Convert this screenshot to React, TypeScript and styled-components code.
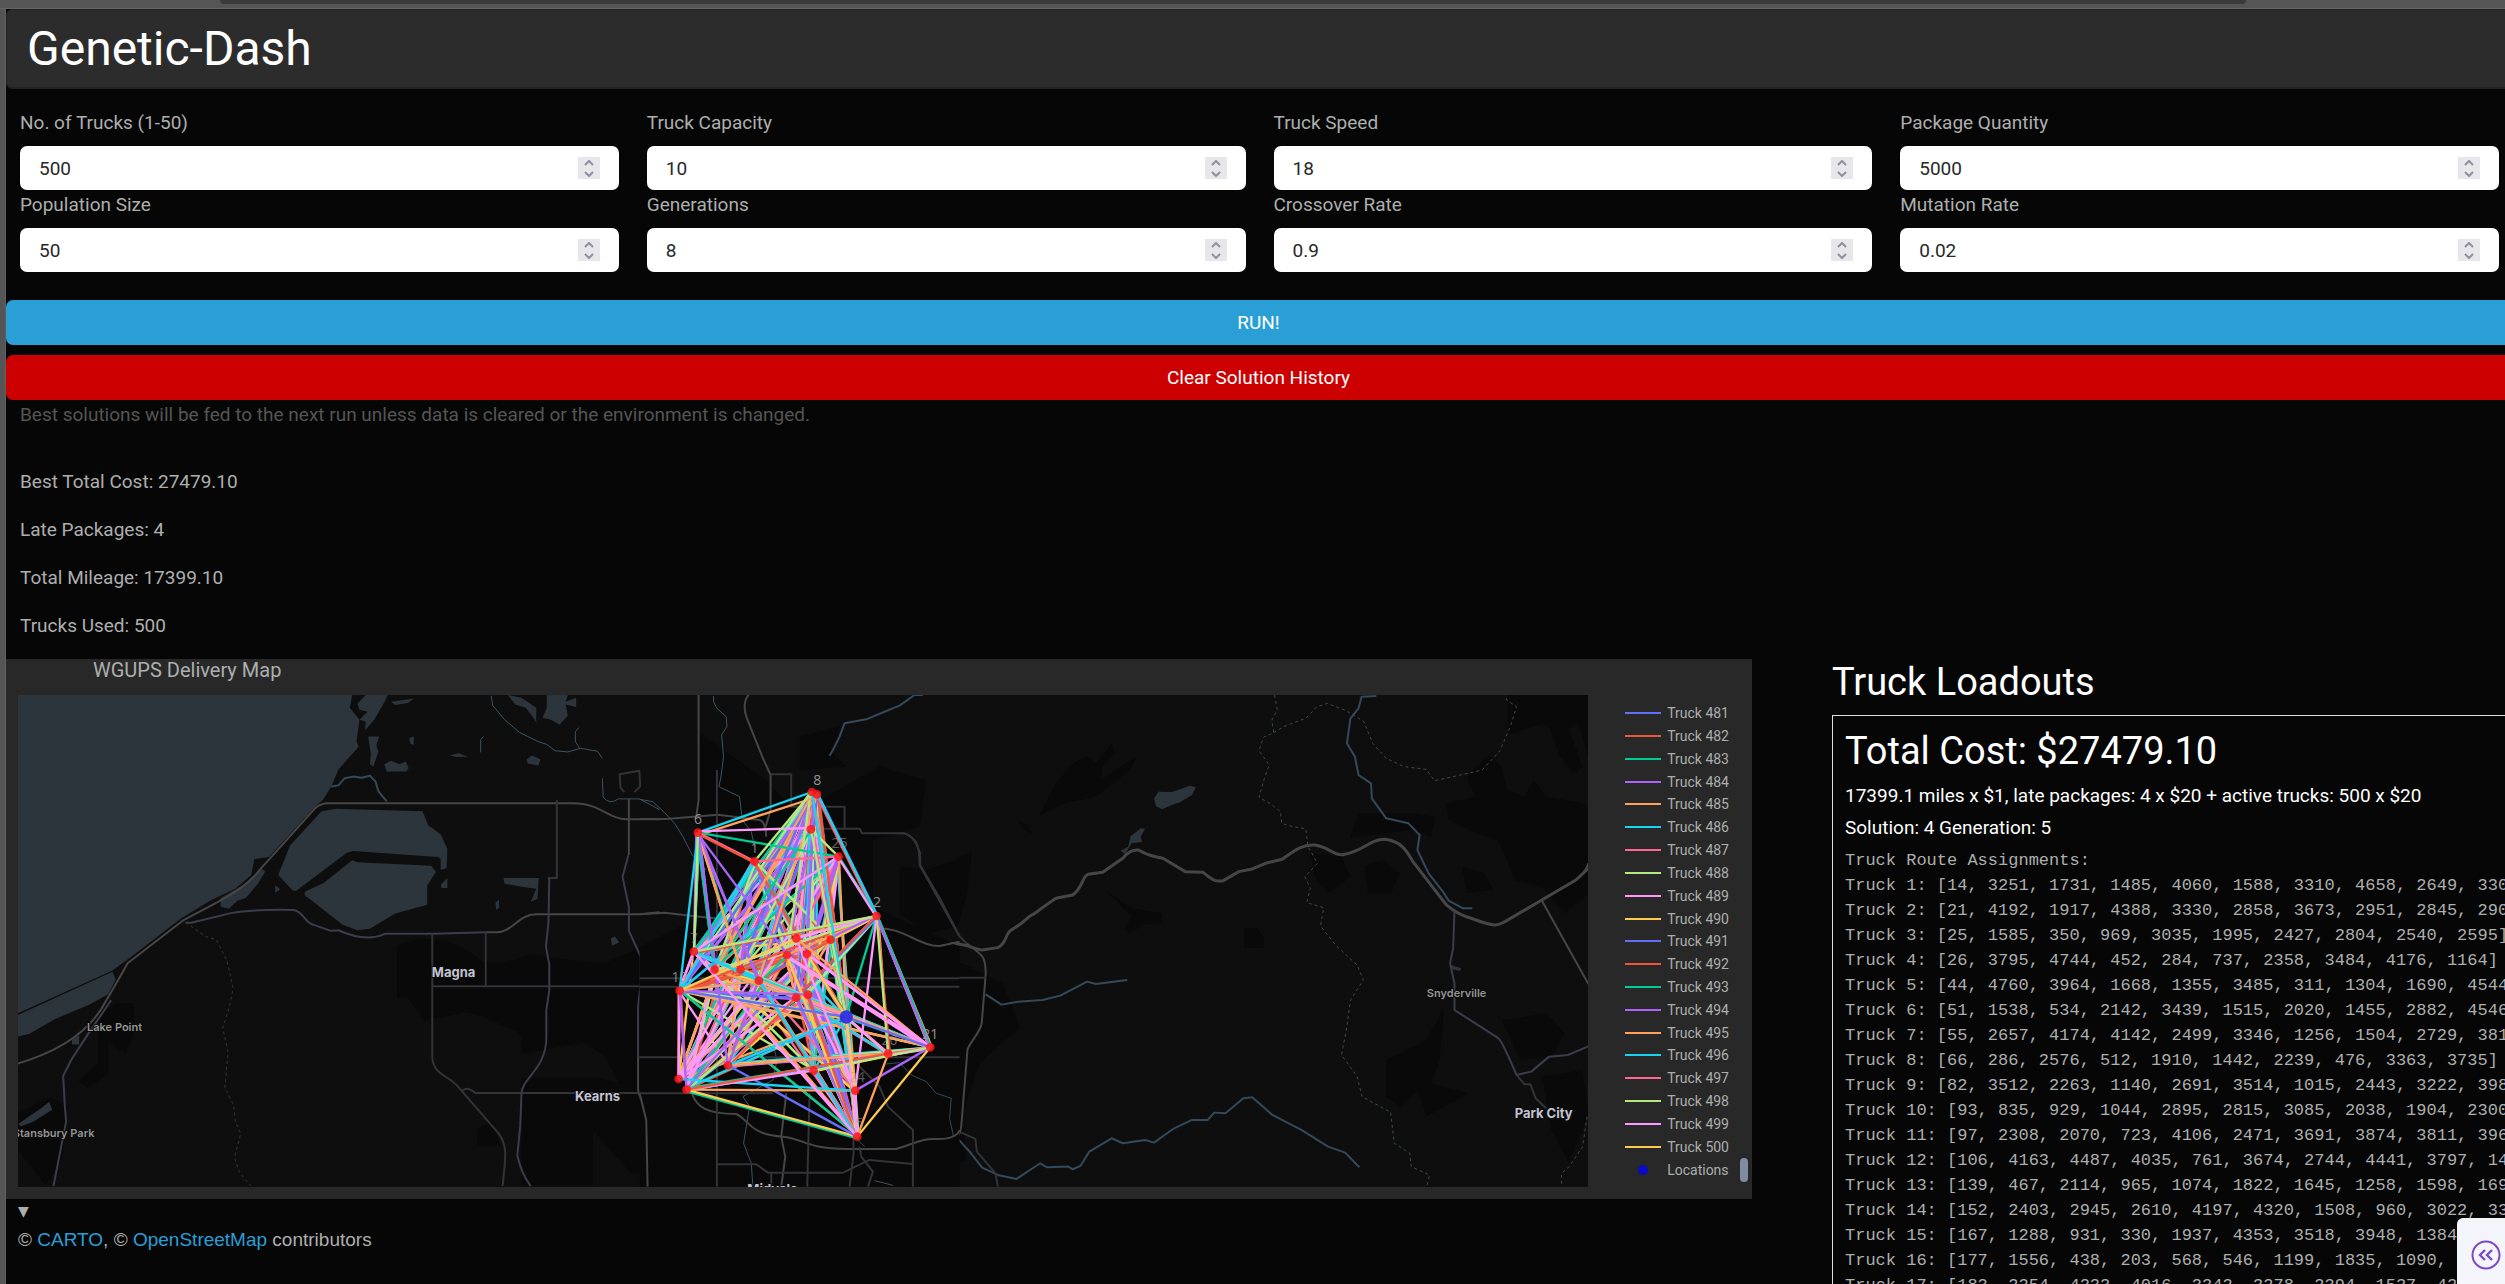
import React from "react";
import styled, { createGlobalStyle } from "styled-components";

const GlobalStyle = createGlobalStyle`
  *, *::before, *::after { box-sizing: border-box; }
  body {
    margin: 0;
    background: #060606;
    color: #adafae;
    font-family: Roboto, "Liberation Sans", sans-serif;
    font-size: 19px;
    line-height: 29px;
  }
`;

const Frame = styled.div`
  height: 100vh;
  overflow: hidden;
  padding-left: 6px;
  background: linear-gradient(to right, #555 5px, #606060 5px, #606060 6px, #060606 6px);
`;

const TabStrip = styled.div`
  height: 9px;
  margin-left: -6px;
  background: #555;
  border-bottom: 1px solid #666;
`;

const AddressBar = styled.div`
  height: 4px;
  margin: 0 259px 0 220px;
  background: #3b3b3b;
  border-radius: 0 0 4px 4px;
`;

const Page = styled.main`
  width: 100vw;
`;

const Header = styled.header`
  height: 80px;
  padding: 0 20px;
  display: flex;
  align-items: center;
  background: #2c2c2c;
  border: 1px solid #222;
  border-bottom-width: 2px;
  border-radius: 6px;
`;

const Brand = styled.h1`
  margin: 0;
  color: #fff;
  font-size: 48px;
  font-weight: 400;
  line-height: 58px;
`;

const Form = styled.form`
  margin: 0;
  padding-top: 19px;
`;

const Fields = styled.div`
  display: grid;
  grid-template-columns: repeat(4, 1fr);
  column-gap: 28px;
  padding: 0 12px 0 14px;
`;

const Field = styled.div`
  display: flex;
  flex-direction: column;
`;

const Label = styled.label`
  margin-bottom: 9px;
`;

const InputBox = styled.div`
  display: flex;
  align-items: center;
  height: 44px;
  padding: 0 19px;
  background: #fff;
  border-radius: 7px;
`;

const NumberInput = styled.input`
  flex: 1;
  min-width: 0;
  padding: 0;
  border: 0;
  outline: 0;
  background: transparent;
  color: #282828;
  font: inherit;
  appearance: textfield;
  &::-webkit-inner-spin-button,
  &::-webkit-outer-spin-button { appearance: none; margin: 0; }
`;

const Stepper = styled.div`
  display: flex;
  flex-direction: column;
  width: 22px;
  height: 22px;
  background: #e6e6eb;
`;

const StepButton = styled.button`
  display: flex;
  flex: 1;
  align-items: center;
  justify-content: center;
  padding: 0;
  border: 0;
  background: none;
  color: #8f8f9d;
`;

const Actions = styled.div`
  display: flex;
  flex-direction: column;
  gap: 10px;
  margin-top: 28px;
`;

const ActionButton = styled.button<{ $tone: string }>`
  height: 45px;
  border: 0;
  border-radius: 7px;
  background: ${(p) => p.$tone};
  color: #fff;
  font: inherit;
`;

const Hint = styled.p`
  margin: 0 14px;
  color: #555;
`;

const Stats = styled.div`
  display: flex;
  flex-direction: column;
  gap: 19px;
  margin: 38px 14px 19px;
`;

const Stat = styled.p`
  margin: 0;
`;

const Results = styled.section`
  display: grid;
  grid-template-columns: 18fr 7fr;
  column-gap: 80px;
`;

const Column = styled.div`
  min-width: 0;
`;

const MapCard = styled.div`
  padding: 0 0 12px 12px;
  background: #282828;
`;

const MapTitle = styled.h2`
  margin: 0;
  padding: 0 0 14px 75px;
  color: #adafae;
  font-size: 20px;
  font-weight: 400;
  line-height: 22px;
`;

const MapBody = styled.div`
  display: flex;
  height: 492px;
`;

const MapSvg = styled.svg`
  flex: 1;
  min-width: 0;
  height: 100%;
  background: #0e0e0e;
`;

const Legend = styled.ul`
  display: flex;
  flex-direction: column;
  justify-content: flex-end;
  flex: none;
  margin: 0;
  padding: 0 0 6px 37px;
  overflow: hidden;
  list-style: none;
  font-size: 14px;
  line-height: 16px;
`;

const LegendRows = styled.div`
  display: grid;
  grid-auto-rows: 1fr;
  flex: none;
  height: 502px;
`;

const LegendRow = styled.li`
  display: flex;
  align-items: center;
  gap: 6px;
  white-space: nowrap;
`;

const Swatch = styled.span<{ $color: string }>`
  width: 36px;
  height: 2px;
  background: ${(p) => p.$color};
`;

const DotCell = styled.span`
  display: flex;
  justify-content: center;
  width: 36px;
`;

const Dot = styled.span`
  width: 10px;
  height: 10px;
  border-radius: 5px;
  background: #0a0ac8;
`;

const LegendTrack = styled.div`
  display: flex;
  align-items: flex-end;
  justify-content: flex-end;
  width: 23px;
  padding: 0 4px 5px 0;
`;

const LegendThumb = styled.div`
  width: 8px;
  height: 24px;
  border-radius: 4px;
  background: #808ba4;
`;

const MapNotes = styled.div`
  padding-left: 12px;
`;

const Marker = styled.div`
  font-family: "DejaVu Sans", sans-serif;
  font-size: 14px;
  line-height: 24px;
`;

const Attribution = styled.p`
  margin: 2px 0 0;
  font-family: "Liberation Sans", Arial, sans-serif;
  a { color: #2a9fd6; text-decoration: none; }
`;

const Heading = styled.h2`
  margin: 0 0 10px;
  color: #fff;
  font-size: 38px;
  font-weight: 400;
  line-height: 46px;
`;

const Loadouts = styled.div`
  padding: 12px;
  border: 1px solid #dedede;
`;

const SubHeading = styled.h3`
  margin: 0 0 9px;
  color: #fff;
  font-size: 19px;
  font-weight: 400;
  line-height: 23px;
`;

const Routes = styled.pre`
  margin: 0;
  font-family: "Liberation Mono", "Courier New", monospace;
  font-size: 17px;
  line-height: 25px;
`;

const ExpandButton = styled.button`
  position: fixed;
  right: 0;
  bottom: 0;
  display: flex;
  align-items: flex-start;
  width: 48px;
  height: 66px;
  padding: 22px 0 0 14px;
  border: 0;
  border-radius: 6px 0 0 0;
  background: #f4f5fb;
`;

type FieldSpec = { id: string; label: string; value: string; step: string };

const FIELDS: FieldSpec[] = [
  { id: "trucks", label: "No. of Trucks (1-50)", value: "500", step: "1" },
  { id: "capacity", label: "Truck Capacity", value: "10", step: "1" },
  { id: "speed", label: "Truck Speed", value: "18", step: "1" },
  { id: "packages", label: "Package Quantity", value: "5000", step: "1" },
  { id: "population", label: "Population Size", value: "50", step: "1" },
  { id: "generations", label: "Generations", value: "8", step: "1" },
  { id: "crossover", label: "Crossover Rate", value: "0.9", step: "0.1" },
  { id: "mutation", label: "Mutation Rate", value: "0.02", step: "0.01" },
];

const STATS = [
  "Best Total Cost: 27479.10",
  "Late Packages: 4",
  "Total Mileage: 17399.10",
  "Trucks Used: 500",
];

const COLORS = [
  "#636efa", "#ef553b", "#00cc96", "#ab63fa", "#ffa15a",
  "#19d3f3", "#ff6692", "#b6e880", "#ff97ff", "#fecb52",
];

const ROUTES = `Truck Route Assignments:
Truck 1: [14, 3251, 1731, 1485, 4060, 1588, 3310, 4658, 2649, 330
Truck 2: [21, 4192, 1917, 4388, 3330, 2858, 3673, 2951, 2845, 290
Truck 3: [25, 1585, 350, 969, 3035, 1995, 2427, 2804, 2540, 2595]
Truck 4: [26, 3795, 4744, 452, 284, 737, 2358, 3484, 4176, 1164]
Truck 5: [44, 4760, 3964, 1668, 1355, 3485, 311, 1304, 1690, 4544
Truck 6: [51, 1538, 534, 2142, 3439, 1515, 2020, 1455, 2882, 4546
Truck 7: [55, 2657, 4174, 4142, 2499, 3346, 1256, 1504, 2729, 381
Truck 8: [66, 286, 2576, 512, 1910, 1442, 2239, 476, 3363, 3735]
Truck 9: [82, 3512, 2263, 1140, 2691, 3514, 1015, 2443, 3222, 398
Truck 10: [93, 835, 929, 1044, 2895, 2815, 3085, 2038, 1904, 2300
Truck 11: [97, 2308, 2070, 723, 4106, 2471, 3691, 3874, 3811, 396
Truck 12: [106, 4163, 4487, 4035, 761, 3674, 2744, 4441, 3797, 14
Truck 13: [139, 467, 2114, 965, 1074, 1822, 1645, 1258, 1598, 169
Truck 14: [152, 2403, 2945, 2610, 4197, 4320, 1508, 960, 3022, 33
Truck 15: [167, 1288, 931, 330, 1937, 4353, 3518, 3948, 1384,
Truck 16: [177, 1556, 438, 203, 568, 546, 1199, 1835, 1090, 1
Truck 17: [183, 2254, 4233, 4016, 3342, 3278, 2394, 1527, 4287`;

/* Delivery stops in the route layer's own coordinates. */
const STOPS: Record<string, [number, number]> = {
  six: [175, 218], eight: [517, 96], eightB: [532, 103], nine: [514, 208],
  one: [345, 304], n25: [597, 290], two: [711, 468], a: [470, 535],
  b: [573, 539], c: [442, 585], d: [502, 582], seven: [163, 575],
  e: [225, 629], f: [303, 629], g: [358, 662], n15: [120, 692],
  h: [470, 713], i: [505, 704], hub: [620, 771], n21: [872, 862],
  n20: [746, 881], j: [265, 916], k: [522, 932], l: [117, 957],
  m: [141, 989], n24: [647, 992], five: [653, 1130],
};

const NORTH = ["eight", "eightB", "nine", "one", "n25"];
const CORE = ["a", "b", "c", "d", "e", "f", "g", "h", "i", "hub", "seven", "n15"];
const SOUTH = ["j", "k", "l", "m", "n24", "hub", "five"];

type Leg = { from: string; to: string; color: string; dx: number; dy: number };

function buildLegs(): Leg[] {
  let seed = 20;
  const next = () => {
    seed = (seed * 16807) % 2147483647;
    return seed / 2147483647;
  };
  const legs: Leg[] = [];
  const add = (from: string, to: string) => {
    if (from === to) return;
    legs.push({
      from, to,
      color: COLORS[Math.floor(next() * 10)],
      dx: Math.round(next() * 12 - 6),
      dy: Math.round(next() * 12 - 6),
    });
  };
  const between = (xs: string[], ys: string[], count: number) => {
    for (let n = 0; n < count; n++) {
      add(xs[Math.floor(next() * xs.length)], ys[Math.floor(next() * ys.length)]);
    }
  };
  between(NORTH, SOUTH, 90);
  between(CORE, SOUTH, 110);
  between(CORE, CORE, 80);
  between(NORTH, CORE, 130);
  between(["two"], [...CORE, "n25", "eightB", "n24", "n20", "j"], 24);
  between(["n21"], [...CORE, "j", "m", "k", "two"], 26);
  between(["n20"], ["hub", "d", "two", "k", "j", "m", "h"], 14);
  between(["five"], ["hub", "k", "n24", "h", "i", "g", "c"], 24);
  between(["six"], ["c", "g", "e", "seven", "f", "j"], 14);
  return legs;
}

const FIXED_LEGS: [string, string, number, number][] = [
  ["six", "eight", 5, 0], ["six", "eightB", 4, 8], ["six", "nine", 8, -4], ["six", "n25", 2, 0],
  ["six", "one", 6, 0], ["six", "one", 1, 4], ["six", "n15", 5, 0], ["six", "seven", 7, 3],
  ["one", "eight", 7, 0], ["one", "n25", 6, 0], ["nine", "n25", 7, 0], ["eightB", "two", 1, 5],
  ["eightB", "two", 6, 0], ["eightB", "two", 5, -6], ["n25", "two", 2, 0], ["n25", "two", 8, 4],
  ["two", "n21", 2, 0], ["two", "n21", 2, -6], ["two", "n21", 3, 4], ["two", "n20", 7, 0],
  ["two", "n24", 8, 0], ["a", "two", 8, 0], ["seven", "two", 7, 0], ["seven", "n25", 8, 0],
  ["c", "n21", 8, 6], ["a", "n21", 4, 0], ["d", "n21", 8, 0], ["hub", "n21", 0, 0],
  ["n20", "n21", 6, 0], ["n20", "n21", 8, 5], ["n24", "n21", 3, 0], ["five", "n21", 9, 0],
  ["five", "n20", 4, 0], ["n24", "five", 8, 0], ["m", "five", 2, 5], ["m", "five", 9, 0],
  ["j", "five", 0, 0], ["m", "n24", 4, 0], ["l", "n24", 5, 0], ["m", "k", 8, 0],
  ["k", "n21", 7, 0], ["j", "n20", 4, 0], ["m", "n20", 1, 0], ["j", "hub", 5, 0],
  ["n15", "l", 6, 0], ["n15", "l", 8, 5], ["n15", "m", 3, 0], ["n15", "hub", 0, 0],
  ["n15", "i", 3, 0], ["n15", "g", 4, 0], ["n15", "a", 9, 0], ["seven", "five", 8, 0],
  ["seven", "g", 5, 0], ["a", "n24", 8, 0], ["hub", "five", 8, 0], ["hub", "n24", 9, 0],
  ["hub", "d", 9, 0], ["hub", "n20", 8, 0], ["eight", "hub", 5, 0], ["nine", "hub", 7, 0],
];

const LEGS = buildLegs();

const STOP_LABELS: [string, number, number, number][] = [
  ["8", 533, 76, 0.9], ["6", 175, 192, 0.9], ["1", 345, 278, 0.8], ["25", 600, 264, 0.6],
  ["2", 712, 442, 0.9], ["7", 163, 548, 0.5], ["19", 120, 667, 0.8], ["21", 872, 836, 0.9],
  ["20", 750, 856, 0.6], ["22", 524, 906, 0.4], ["24", 652, 966, 0.5], ["5", 660, 1104, 0.5],
  ["18", 470, 510, 0.3], ["9", 620, 736, 0.4], ["13", 518, 176, 0.3],
];

const ROAD = "#464646";
const ROAD_DIM = "#333338";
const ROAD_BLUE = "#3b3d4d";
const STREAM = "#34495a";
const WATER = "#2c353c";
const URBAN = "#090909";

type StrokeProps = { d: string; c?: string; w?: number; dash?: string };

const Stroke = ({ d, c = ROAD, w = 2, dash }: StrokeProps) => (
  <path d={d} fill="none" stroke={c} strokeWidth={w} strokeDasharray={dash}
    strokeLinejoin="round" vectorEffect="non-scaling-stroke" />
);

const WestTerrain = () => (
  <g transform="translate(0 660) scale(0.4209 0.398)">
    <g fill={URBAN}>
      <path d="M945 718L1000 700L1060 705L1105 725L1150 760H1200L1260 740L1340 752L1440 760L1530 720L1568 700V1200L1500 1120L1440 1000L1390 960L1240 990V940L1160 900L1110 885L1010 905L970 850H945Z" />
      <path d="M232 890L280 862L318 862L320 930L300 990L258 960L258 1040L210 1075L188 1058L235 1010Z" />
      <path d="M43 1140L120 1100L160 1120L150 1250L110 1320L43 1230Z" />
      <path d="M1240 1050H1420L1568 1080V1290H1500L1410 1180V1320H1240ZM1135 1180L1170 1160L1190 1220H1135Z" />
    </g>
    <g fill={WATER}>
      <path d="M43 88H838L832 120L855 150L848 205L853 218L805 275L788 318L768 352L750 368L640 495L605 500L598 540L560 575L500 605L495 575L500 605L430 650L310 748L268 780L43 888Z" />
      <path d="M43 892L268 783L276 803L258 840L215 865L130 903L70 940L43 946Z" />
      <path d="M525 598L580 565L620 525L632 530L615 560L585 598L565 605L545 625L525 620Z" />
      <path d="M765 380L800 374L1005 380L1018 415L1048 438L1064 475L1062 523L1048 527V500L1042 495L840 480L825 484L705 580L697 580L662 540L690 466Z" />
      <path d="M838 503L850 508L1025 517L1037 532L1016 566V615L940 637L880 675L850 679L815 665L740 603L725 592V582L770 560Z" />
      <path d="M850 110L870 88H922L915 105L890 150L868 177L870 155L855 150L874 130L855 125ZM930 105L985 97L970 108L940 113Z" />
      <path d="M876 192H902L895 215L900 230L888 268L880 262L882 235L878 210ZM914 262L930 253L950 262L965 255L972 272L965 280H920ZM973 196L984 192V214L976 210ZM1070 240L1090 234L1113 243L1085 244Z" />
      <path d="M1208 88L1240 95L1275 120V157L1265 140L1250 120L1225 112ZM1300 88H1350L1345 105L1370 95V118L1345 112L1350 140L1330 163L1310 150L1290 145L1300 120ZM1252 250L1265 240L1285 250L1280 265L1255 260Z" />
      <path d="M1197 548H1281L1278 600L1262 608L1275 575L1240 570L1200 562ZM1178 610L1186 602L1187 622L1180 628ZM1048 565L1064 548V573H1050ZM654 566L667 576L655 585ZM1452 700L1462 694L1472 710L1455 718ZM172 955L189 943V966H172Z" />
      <path d="M45 1165L100 1125L118 1110L125 1130L80 1160L50 1172Z" />
    </g>
    <Stroke c="#3e5361" w={1} d="M1168 90L1172 115L1200 150L1235 182L1282 206L1300 212L1320 228L1350 231L1380 222L1420 229L1432 247M1376 170L1368 180V205L1378 222M1150 192L1143 200V232" />
    <Stroke c={STREAM} d="M788 318L805 315L820 297L840 293L860 296L880 291L893 305L900 330L920 355" />
    <Stroke d="M43 1014Q200 965 252 858Q290 790 304 762L435 655L520 607Q590 568 620 525L750 372Q763 360 780 360H1362C1430 360 1445 400 1487 400H1568" />
    <Stroke c={ROAD_BLUE} d="M442 660H455L550 636Q600 626 700 628C725 636 725 660 745 665L785 680L805 679Q870 710 915 688L1030 688L1155 684" />
    <Stroke d="M1155 684H1180C1220 684 1230 640 1275 639H1520L1568 634" />
    <Stroke c={ROAD_DIM} d="M1324 352V548H1302M1155 684V819M1028 690V1000C1032 1040 1060 1042 1085 1067L1186 1190C1208 1222 1202 1250 1195 1322M1028 820H1568M1100 1082Q1112 1070 1130 1088H1568M1518 998H1568" />
    <Stroke c={ROAD_BLUE} d="M1306 548L1304 660L1298 720L1306 765V830L1299 880V950C1298 1030 1240 1050 1240 1090L1237 1170L1230 1245Q1240 1292 1262 1322M1494 490L1480 545L1495 620V680L1523 745V815L1517 870V1000" />
    <Stroke d="M1495 350V490M1517 1000V1080L1537 1160L1539 1322" />
    <Stroke c="#333" d="M1484 332L1475 320L1473 287L1520 278L1522 318L1508 332" />
    <Stroke c="#3e5361" w={1} d="M1432 297L1434 345Q1450 365 1470 349H1520L1568 376" />
    <Stroke c={ROAD_BLUE} d="M265 855L210 940L170 1005L151 1045L155 1120L158 1160L128 1322" />
    <Stroke c="#363636" w={1} dash="3 3" d="M442 660L490 695L515 703L540 755L555 825L545 875L530 925L543 985L535 1075L556 1118L560 1160L573 1190L558 1250L570 1288L597 1322" />
  </g>
);

const EastTerrain = () => (
  <g transform="translate(900 680) scale(0.4464 0.3333)">
    <g fill={URBAN}>
      <path d="M312 408L350 310L390 250L420 225L440 250L475 190L482 215L455 260L450 300L530 230L520 265L440 350L370 370ZM265 425L290 435L297 465L280 450ZM465 635L520 685L588 700L585 730L545 735L515 760L505 745L520 710ZM772 745L800 743L815 770V803H772ZM1362 45H1543V230L1520 130L1480 160L1440 130L1362 165ZM1455 140L1500 150L1530 260L1510 283L1480 230Z" />
      <path d="M1270 290L1320 225L1350 260L1360 330L1400 350L1420 300L1450 350L1530 370L1543 380V640L1490 700L1440 620L1380 600L1340 480L1290 460L1230 420L1225 370L1290 350Z" />
      <path d="M920 520L990 530L1010 590L960 640L930 590ZM1030 400L1150 400L1200 410L1190 470L1150 450L1090 460L1010 470ZM1040 560L1080 540L1120 580L1100 640L1050 640ZM1260 560L1310 580L1330 630L1270 640ZM1090 1140L1180 1080L1220 980L1210 1140L1190 1210L1275 1240L1180 1310L1160 1230L1120 1280L1090 1250ZM1350 1020L1450 1000L1490 1060L1460 1130L1390 1140ZM1440 1190L1530 1170L1543 1300L1500 1450L1460 1350Z" />
      <path d="M0 560L60 570L115 545L162 515L150 650L130 740L60 760L0 700ZM0 830L140 850L230 910L270 1040L180 1150L140 1300L150 1440L0 1480Z" />
    </g>
    <path fill={WATER} d="M570 355L580 335L610 336L650 317L664 322L655 345L630 365L605 378L588 388L574 378ZM495 512L512 500L517 470L540 445L550 446L540 470L543 486L520 490L505 522ZM1235 855L1258 865L1255 873L1238 868Z" />
    <Stroke c="#3c4a50" w={1} dash="3 3" d="M840 45L846 90L834 120L838 158L815 172L805 212L828 255L816 300L805 352L832 372L853 395L856 430L880 440L910 446L915 500L936 550L908 590L920 625L912 668L950 683L943 738L980 800L1025 855L1039 900L1010 960L1002 1040L990 1125L1025 1190L1036 1250L1100 1297L1108 1390L1143 1420L1146 1460L1187 1485L1181 1520" />
    <Stroke c="#3c4a50" w={1} dash="3 3" d="M838 158L860 140L910 115L935 80L958 70L1000 92L1040 125L1060 190L1090 235L1130 260L1180 268L1198 302L1240 290L1305 270L1345 212L1368 140L1382 80L1360 60V45M1540 1310L1530 1400L1500 1460L1483 1480V1520" />
    <Stroke c={STREAM} d="M1068 48L1035 50L1028 85L1010 115L1002 190L1020 230L1028 285L1056 310L1058 355L1090 415L1140 430L1165 465L1160 510L1185 580L1217 635L1230 662L1262 685H1283M193 943L228 974L265 965L320 960L360 947L420 905L440 912L510 900M10 1160L25 1183L68 1215L92 1250L115 1255L112 1320L125 1368L160 1420L185 1463L220 1485L262 1497L315 1450L330 1462L378 1460L388 1468L405 1458L425 1415L475 1375L500 1390L550 1380L570 1388L615 1345L655 1320H690L705 1298L730 1300L770 1255L790 1252L835 1305L900 1350L960 1400L998 1418L1030 1462" />
    <Stroke w={3} d="M0 757C60 790 80 805 110 792C150 785 165 810 185 810L220 803C240 790 236 765 248 752C280 728 290 705 300 703L320 683L350 655L388 645C412 620 408 590 422 583L455 577L500 535Q515 508 535 510C560 530 570 528 590 535L640 575L680 577C705 605 710 605 725 602L760 575L790 567L820 550L857 538C890 505 905 493 930 495C960 500 970 525 992 524C1040 515 1050 478 1088 478C1130 485 1140 525 1150 545L1225 675Q1250 705 1285 717C1340 745 1340 735 1360 722L1515 600L1543 565" />
    <Stroke d="M150 790C190 830 192 830 193 880L184 1030C180 1060 155 1090 152 1110L138 1340Q135 1375 120 1377H55L0 1400" />
    <Stroke d="M1438 660L1543 912M1515 600Q1535 580 1543 550" />
    <Stroke c={ROAD_BLUE} d="M1243 695L1240 805L1233 850L1243 910V990L1342 1075Q1352 1090 1382 1185L1415 1175L1455 1130L1497 1125L1543 1099" />
    <Stroke c={ROAD_DIM} d="M1382 1185L1400 1213H1413L1425 1255L1448 1285M0 460C30 455 40 500 46 520V555L90 655L135 770L150 790M0 893H193M0 1310C25 1330 30 1340 30 1370V1520M138 1358L170 1377L173 1415L215 1480L220 1520" />
  </g>
);

const CityGrid = () => (
  <g transform="translate(640 760) scale(0.3333)">
    <g fill={URBAN}>
      <path d="M180 -80L380 60L460 150L560 110L720 20L860 60L840 200L700 240V440L960 560V1280H0V560L160 480L170 160Z" />
      <path d="M480 -70L600 -100L580 -20L620 20L480 30Z" />
    </g>
    <Stroke c="#3e5361" w={1} d="M0 118L40 125L75 158L105 190L130 230L158 285L200 330M405 870L412 900L400 960L310 1010L330 1040L312 1150L335 1210L340 1280M705 1262L760 1276" />
    <Stroke c="#3e5361" w={1} d="M222 -192V-175L232 -155L260 -130L262 -100L246 -75L252 -10L245 45L238 80L300 110L308 180L335 215L345 260" />
    <Stroke c={STREAM} w={1} d="M650 1120L660 1145L675 1160M740 912L780 908L815 945L860 965L890 1000L935 1015L930 1075L942 1130" />
    <Stroke d="M177 -200V120L170 170M330 -200Q305 -170 322 -125L368 -10L393 45V150L378 200M0 177H80L235 164L360 180Q378 185 380 230M0 463L75 458L160 468L240 476M710 505C790 500 840 560 900 558L960 545M157 1000C170 1040 200 1062 290 1062C330 1080 330 1125 430 1130C490 1135 500 1167 620 1167H770C830 1150 840 1137 880 1137Q950 1140 960 1110M440 1000L425 1130L437 1190L425 1280M0 1000L20 1080L24 1280" />
    <Stroke c={ROAD_DIM} d="M232 30V1280M393 43H455V140H615V205M380 206H660L668 220H795C830 235 840 250 840 315L960 530M0 680H960M0 655H960M0 892H960M0 1000H400M510 1000L503 1280M640 1000L642 1180L630 1280M820 1280V1110L745 1040L720 980L640 900M235 1213H350L385 1238H610L690 1200L820 1212M660 1160L665 1190L700 1235L685 1280M395 1240V1280" />
  </g>
);

const RouteLayer = () => (
  <g transform="translate(640 760) scale(0.3333)">
    <g strokeWidth="7">
      {LEGS.map((leg, n) => {
        const [x1, y1] = STOPS[leg.from];
        const [x2, y2] = STOPS[leg.to];
        return (
          <line key={n} x1={x1 + leg.dx} y1={y1} x2={x2} y2={y2 + leg.dy} stroke={leg.color} />
        );
      })}
      {FIXED_LEGS.map(([from, to, color, shift], n) => (
        <line key={n} x1={STOPS[from][0]} y1={STOPS[from][1] + shift}
          x2={STOPS[to][0]} y2={STOPS[to][1] + shift} stroke={COLORS[color]} />
      ))}
    </g>
    <g fill="#a0a0a0" fontSize="42" fontFamily='"Open Sans", sans-serif' textAnchor="middle">
      {STOP_LABELS.map(([text, x, y, opacity]) => (
        <text key={text} x={x} y={y} opacity={opacity}>{text}</text>
      ))}
    </g>
    {Object.entries(STOPS).map(([key, [x, y]]) =>
      key === "hub" ? (
        <circle key={key} cx={x} cy={y} r={20} fill="#2f2fe0" opacity={0.95} />
      ) : (
        <circle key={key} cx={x} cy={y} r={13} fill="#ff1414" opacity={0.85} />
      )
    )}
  </g>
);

const PlaceNames = () => (
  <g fontFamily="Inter, sans-serif" stroke="#0a0a0a" strokeWidth="2" paintOrder="stroke" textAnchor="middle">
    <g fontSize="13" fontWeight="700" fill="#c3c3d2">
      <text x="454" y="977">Magna</text>
      <text x="598" y="1101">Kearns</text>
      <text x="1544" y="1118">Park City</text>
      <text x="773" y="1194">Midvale</text>
    </g>
    <g fontSize="11" fontWeight="600" fill="#959595">
      <text x="115" y="1031">Lake Point</text>
      <text x="54" y="1137">Stansbury Park</text>
      <text x="1457" y="997">Snyderville</text>
    </g>
  </g>
);

const Chevron = ({ up }: { up?: boolean }) => (
  <svg width="10" height="6" viewBox="0 0 10 6" fill="none" stroke="currentColor" strokeWidth="2">
    <path d={up ? "M1 5L5 1L9 5" : "M1 1L5 5L9 1"} />
  </svg>
);

const NumberField = ({ id, label, value, step }: FieldSpec) => (
  <Field>
    <Label htmlFor={id}>{label}</Label>
    <InputBox>
      <NumberInput id={id} type="number" step={step} defaultValue={value} />
      <Stepper>
        <StepButton type="button" aria-label={`Increase ${label}`}><Chevron up /></StepButton>
        <StepButton type="button" aria-label={`Decrease ${label}`}><Chevron /></StepButton>
      </Stepper>
    </InputBox>
  </Field>
);

const MapLegend = () => (
  <Legend>
    <LegendRows>
      {Array.from({ length: 21 }, (_, n) => 480 + n).map((truck) => (
        <LegendRow key={truck}>
          <Swatch $color={COLORS[(truck - 1) % 10]} />
          <span>{`Truck ${truck}`}</span>
        </LegendRow>
      ))}
      <LegendRow>
        <DotCell><Dot /></DotCell>
        <span>Locations</span>
      </LegendRow>
    </LegendRows>
  </Legend>
);

export default function App() {
  return (
    <Frame>
      <GlobalStyle />
      <TabStrip><AddressBar /></TabStrip>
      <Page>
        <Header><Brand>Genetic-Dash</Brand></Header>
        <Form onSubmit={(e) => e.preventDefault()}>
          <Fields>
            {FIELDS.map((field) => <NumberField key={field.id} {...field} />)}
          </Fields>
          <Actions>
            <ActionButton type="submit" $tone="#2a9fd6">RUN!</ActionButton>
            <ActionButton type="button" $tone="#cc0000">Clear Solution History</ActionButton>
          </Actions>
        </Form>
        <Hint>Best solutions will be fed to the next run unless data is cleared or the environment is changed.</Hint>
        <Stats>
          {STATS.map((line) => <Stat key={line}>{line}</Stat>)}
        </Stats>
        <Results>
          <Column>
            <MapCard>
              <MapTitle>WGUPS Delivery Map</MapTitle>
              <MapBody>
                <MapSvg viewBox="18 695 1571 492" preserveAspectRatio="xMidYMid slice">
                  <WestTerrain />
                  <EastTerrain />
                  <CityGrid />
                  <g transform="translate(600 685) scale(0.3333)">
                    <Stroke c={STREAM} d="M690 212L700 195L720 155L735 115L800 103L860 78L900 62L945 30H970" />
                  </g>
                  <PlaceNames />
                  <RouteLayer />
                </MapSvg>
                <MapLegend />
                <LegendTrack><LegendThumb /></LegendTrack>
              </MapBody>
            </MapCard>
            <MapNotes>
              <Marker>▼</Marker>
              <Attribution>
                © <a href="#carto">CARTO</a>, © <a href="#osm">OpenStreetMap</a> contributors
              </Attribution>
            </MapNotes>
          </Column>
          <Column>
            <Heading>Truck Loadouts</Heading>
            <Loadouts>
              <Heading>Total Cost: $27479.10</Heading>
              <SubHeading>17399.1 miles x $1, late packages: 4 x $20 + active trucks: 500 x $20</SubHeading>
              <SubHeading>Solution: 4 Generation: 5</SubHeading>
              <Routes>{ROUTES}</Routes>
            </Loadouts>
          </Column>
        </Results>
      </Page>
      <ExpandButton type="button" aria-label="Expand panel">
        <svg width="30" height="30" viewBox="0 0 30 30" fill="none" stroke="#7e49c3" strokeWidth="2">
          <circle cx="15" cy="15" r="13.5" />
          <path d="M14 10L9 15L14 20M21 10L16 15L21 20" strokeWidth="2.4" />
        </svg>
      </ExpandButton>
    </Frame>
  );
}
